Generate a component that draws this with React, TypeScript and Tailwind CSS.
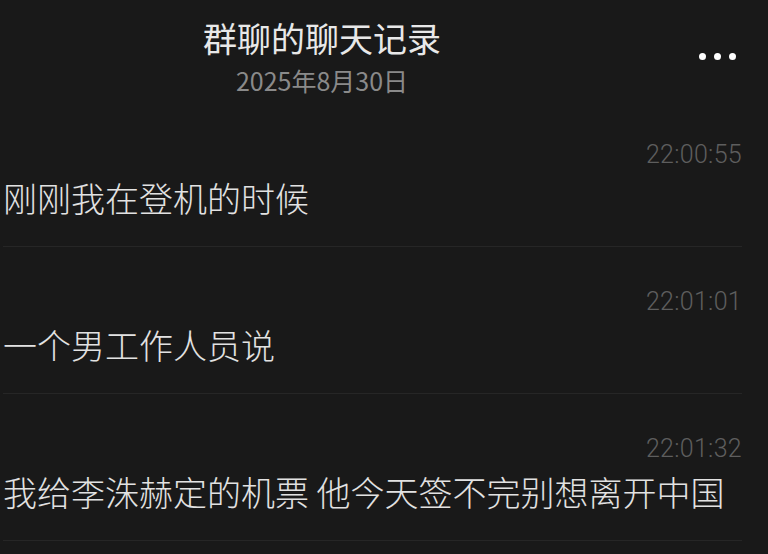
import React from "react";

const messages = [
  { time: "22:00:55", text: "刚刚我在登机的时候" },
  { time: "22:01:01", text: "一个男工作人员说" },
  { time: "22:01:32", text: "我给李洙赫定的机票 他今天签不完别想离开中国" },
];

export default function App() {
  return (
    <div
      className="w-[768px] h-[554px] overflow-hidden bg-[#191919]"
      style={{ fontFamily: '"Noto Sans CJK SC", "Noto Sans", sans-serif' }}
    >
      <div className="flex h-[100px]">
        <div className="w-[644px] flex flex-col items-center pt-[18px]">
          <div className="text-[34px] leading-[40px] text-[#e8e8e8]">群聊的聊天记录</div>
          <div className="mt-[7px] text-[25px] leading-[30px] text-[#8a8a8a]">2025年8月30日</div>
        </div>
        <div className="flex-1 flex justify-end items-start pt-[53px] pr-[32px]">
          <div className="flex gap-[8px]">
            <span className="w-[7px] h-[7px] rounded-full bg-white" />
            <span className="w-[7px] h-[7px] rounded-full bg-white" />
            <span className="w-[7px] h-[7px] rounded-full bg-white" />
          </div>
        </div>
      </div>
      <div className="ml-[3px] w-[739px] flex flex-col">
        {messages.map((m) => (
          <div key={m.time} className="pt-[40px] pb-[26px] border-b border-[#262626]">
            <div
              className="text-right text-[25px] leading-[30px] font-light text-[#5e5e5e] tracking-[0.3px]"
              style={{ fontFamily: 'Roboto, "Noto Sans", sans-serif' }}
            >
              {m.time}
            </div>
            <div className="mt-[6px] text-[34px] leading-[44px] font-light text-[#e2e2e2] whitespace-nowrap">
              {m.text}
            </div>
          </div>
        ))}
      </div>
    </div>
  );
}
